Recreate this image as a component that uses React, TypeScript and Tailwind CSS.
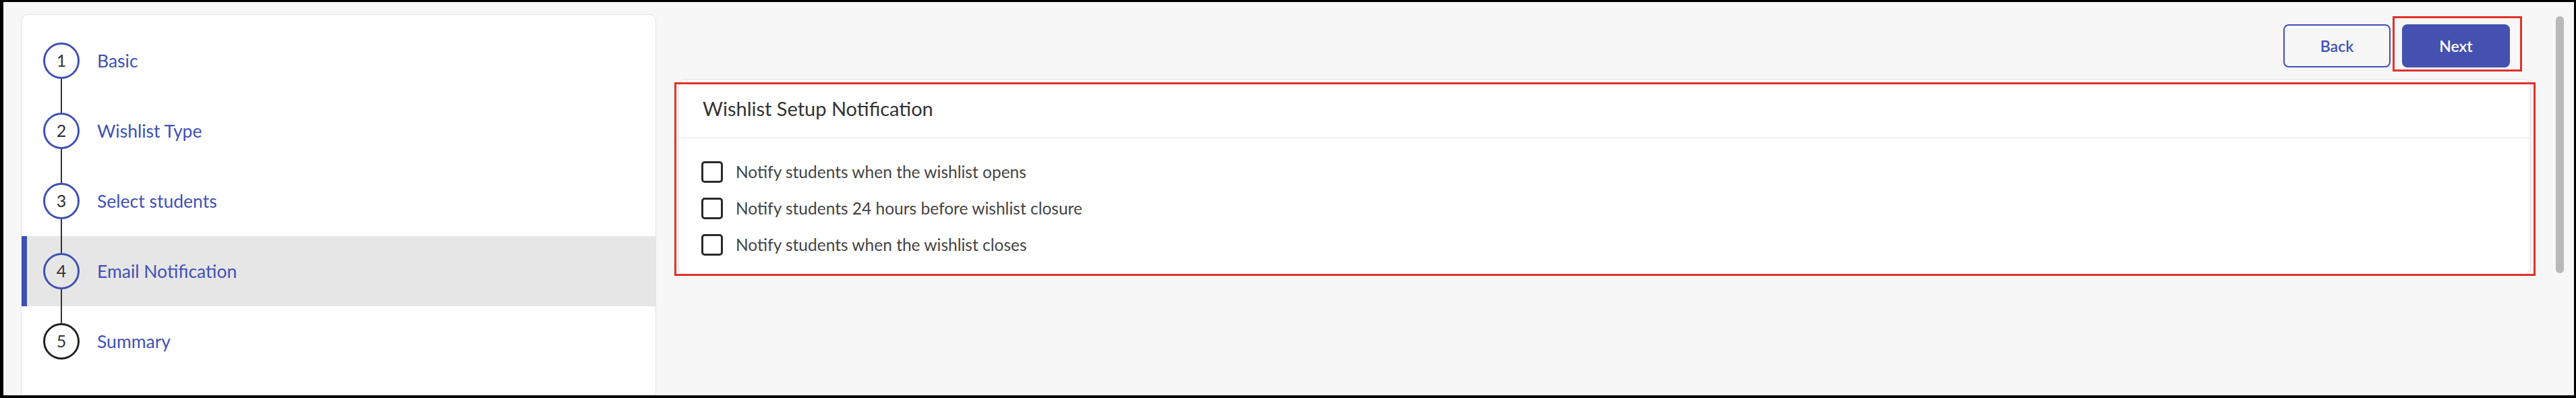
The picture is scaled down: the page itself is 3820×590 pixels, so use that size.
import React from "react";

const steps = [
  { n: 1, label: "Basic", done: true },
  { n: 2, label: "Wishlist Type", done: true },
  { n: 3, label: "Select students", done: true },
  { n: 4, label: "Email Notification", done: true, active: true },
  { n: 5, label: "Summary", done: false },
];

const options = [
  "Notify students when the wishlist opens",
  "Notify students 24 hours before wishlist closure",
  "Notify students when the wishlist closes",
];

export default function App() {
  return (
    <div className="w-[3820px] h-[590px] overflow-hidden bg-[#f7f7f7] border-black border-t-[3px] border-l-[5px] border-r-[3px] border-b-[4px] flex font-['Lato','Noto_Sans',sans-serif]">
      {/* Sidebar */}
      <div className="ml-[26px] mt-[18px] w-[942px] h-[600px] shrink-0 bg-white border border-[#e3e3e3] rounded-t-[10px] pt-[16px]">
        {steps.map((s, i) => (
          <div
            key={s.n}
            className={`relative h-[104px] flex items-center ${s.active ? "bg-[#e6e6e6]" : ""}`}
          >
            {s.active && <div className="absolute left-0 top-0 bottom-0 w-[8px] bg-[#3f51b5]" />}
            <div className="ml-[32px] w-[54px] h-full flex flex-col items-center">
              <div className={`flex-1 w-[2px] ${i === 0 ? "bg-transparent" : "bg-[#333333]"}`} />
              <div
                className={`w-[54px] h-[54px] shrink-0 rounded-full border-[3px] flex items-center justify-center text-[25px] text-[#333333] ${
                  s.done ? "border-[#3f51b5]" : "border-[#222222]"
                }`}
              >
                {s.n}
              </div>
              <div className={`flex-1 w-[2px] ${i === steps.length - 1 ? "bg-transparent" : "bg-[#333333]"}`} />
            </div>
            <div className="ml-[26px] text-[26.5px] text-[#3f51b5] leading-none">{s.label}</div>
          </div>
        ))}
      </div>

      {/* Main */}
      <div className="ml-[33px] flex-1 flex flex-col">
        <div className="mt-[33px] flex justify-end gap-[17px] pr-[31px]">
          <button className="w-[159px] h-[64px] border-2 border-[#3f51b5] rounded-[8px] text-[#3f51b5] text-[23px] font-semibold">
            Back
          </button>
          <div className="relative">
            <button className="w-[160px] h-[64px] bg-[#4451b0] rounded-[8px] text-white text-[23px] font-semibold">
              Next
            </button>
            <div className="absolute -left-[14px] -right-[18px] -top-[12px] -bottom-[6px] border-[3px] border-[#e2312a] pointer-events-none" />
          </div>
        </div>

        <div className="relative mt-[17px] bg-white border border-[#e0e0e0] rounded-[10px]">
          <div className="h-[87px] border-b border-[#e3e3e3] px-[35px] flex items-center text-[29px] text-[#333333]">
            Wishlist Setup Notification
          </div>
          <div className="pt-[23px] pb-[16px] px-[33px]">
            {options.map((o) => (
              <div key={o} className="h-[54px] flex items-center">
                <div className="w-[32px] h-[32px] shrink-0 border-[3px] border-[#2a2a2a] rounded-[5px]" />
                <div className="ml-[19px] text-[24.5px] text-[#444444]">{o}</div>
              </div>
            ))}
          </div>
          <div className="absolute -left-[7px] -right-[8px] top-[4px] -bottom-[3px] border-[3px] border-[#e2312a] pointer-events-none" />
        </div>
      </div>

      {/* Scrollbar */}
      <div className="w-[64px] shrink-0">
        <div className="ml-[37px] mt-[21px] w-[12px] h-[381px] rounded-full bg-[#b9b9b9]" />
      </div>
    </div>
  );
}
